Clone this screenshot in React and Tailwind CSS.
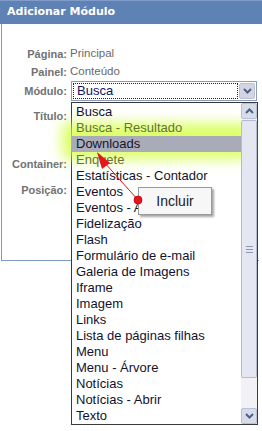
import React from 'react'

const items = [
  'Busca',
  'Busca - Resultado',
  'Downloads',
  'Enquete',
  'Estatísticas - Contador',
  'Eventos',
  'Eventos - Agenda',
  'Fidelização',
  'Flash',
  'Formulário de e-mail',
  'Galeria de Imagens',
  'Iframe',
  'Imagem',
  'Links',
  'Lista de páginas filhas',
  'Menu',
  'Menu - Árvore',
  'Notícias',
  'Notícias - Abrir',
  'Texto',
]

function Chevron({ up }) {
  return (
    <svg width="9" height="6" viewBox="0 0 9 6">
      <polyline
        points={up ? '1,5 4.5,1.5 8,5' : '1,1 4.5,4.5 8,1'}
        fill="none"
        stroke="#4d6185"
        strokeWidth="2"
      />
    </svg>
  )
}

function ScrollButton({ up }) {
  return (
    <div className="h-[16px] w-[16px] shrink-0 rounded-[2px] border border-[#b7c0d6] bg-[#d7dcea] flex items-center justify-center">
      <Chevron up={up} />
    </div>
  )
}

function Row({ label, children, className = '' }) {
  return (
    <div className={`flex items-center ${className}`}>
      <div className="w-[65px] text-right font-bold text-[11px] text-[#727272]">{label}</div>
      {children}
    </div>
  )
}

export default function App() {
  return (
    <div className="relative w-[262px] h-[431px] bg-white overflow-hidden font-['Liberation_Sans',Arial,sans-serif]">
      <div className="h-[24px] bg-[#5f82b4] border-t border-[#7f9ccb] pl-[7px] flex items-center">
        <span className="font-['DejaVu_Sans',Verdana,sans-serif] font-bold text-[11px] text-white">
          Adicionar Módulo
        </span>
      </div>

      <div className="ml-px w-[258px] h-[237px] border-l border-b border-[#7b9ac6] pt-[21px] flex flex-col">
        <Row label="Página:" className="h-[18px]">
          <span className="pl-[3px] text-[11.5px] text-[#6a6a6a]">Principal</span>
        </Row>
        <Row label="Painel:" className="h-[18px]">
          <span className="pl-[3px] text-[11.5px] text-[#6a6a6a]">Conteúdo</span>
        </Row>
        <Row label="Módulo:" className="h-[20px]">
          <div className="ml-[4px] w-[186px] h-[20px] border border-[#8c9bb6] flex items-stretch p-px bg-white">
            <div className="flex-1 border border-dotted border-[#222] flex items-center pl-[3px] text-[13px] text-[#14145a]">
              Busca
            </div>
            <div className="w-[16px] ml-px rounded-[2px] border border-[#b7c0d6] bg-[#d3d6e0] flex items-center justify-center">
              <Chevron />
            </div>
          </div>
        </Row>
        <Row label="Título:" className="h-[18px] mt-[6px]" />
        <Row label="Container:" className="h-[18px] mt-[30px]" />
        <Row label="Posição:" className="h-[18px] mt-[8px]" />
      </div>

      {/* open dropdown list */}
      <div className="absolute left-[71px] top-[102px] w-[187px] h-[323px] border border-[#3a3a3a] bg-white flex">
        <div className="relative flex-1 flex flex-col pt-px">
          {items.map((it) => {
            const sel = it === 'Downloads'
            const glowed = it === 'Busca - Resultado' || it === 'Enquete'
            return (
              <div
                key={it}
                className={`h-[16px] pl-[4px] flex items-center whitespace-nowrap text-[13px] ${
                  sel
                    ? 'relative z-10 bg-[#a9abb9] text-[#15152e] shadow-[0_-3px_13px_10px_rgba(210,255,60,0.78)]'
                    : glowed
                    ? 'relative z-20 text-[#667238]'
                    : 'relative z-20 text-[#12122e]'
                }`}
              >
                {it}
              </div>
            )
          })}
        </div>
        <div className="relative z-30 w-[16px] bg-[#f2f2f6] flex flex-col">
          <ScrollButton up />
          <div className="mt-px h-[258px] rounded-[2px] border border-[#b4bbcf] bg-[#e4e7f1] flex flex-col items-center justify-center gap-[2px]">
            <div className="w-[7px] h-px bg-[#8e98b4]" />
            <div className="w-[7px] h-px bg-[#8e98b4]" />
            <div className="w-[7px] h-px bg-[#8e98b4]" />
          </div>
          <div className="flex-1" />
          <ScrollButton />
        </div>
      </div>

      {/* annotation arrow */}
      <svg className="absolute left-0 top-0 z-40" width="262" height="431" viewBox="0 0 262 431">
        <line x1="138" y1="200" x2="104" y2="162" stroke="#e0141c" strokeWidth="1" />
        <polygon points="97,152 110,163 102,169" fill="#e8141c" />
        <circle cx="138" cy="200" r="4" fill="#e8141c" stroke="#a80c10" strokeWidth="0.8" />
      </svg>

      {/* callout */}
      <div className="absolute left-[138px] top-[187px] z-30 w-[74px] h-[28px] bg-[#f7f7f7] border border-[#9a9a9a] shadow-[2px_2px_2px_rgba(0,0,0,0.35)] flex items-center justify-center text-[14px] text-[#1a1a2a]">
        Incluir
      </div>
    </div>
  )
}
